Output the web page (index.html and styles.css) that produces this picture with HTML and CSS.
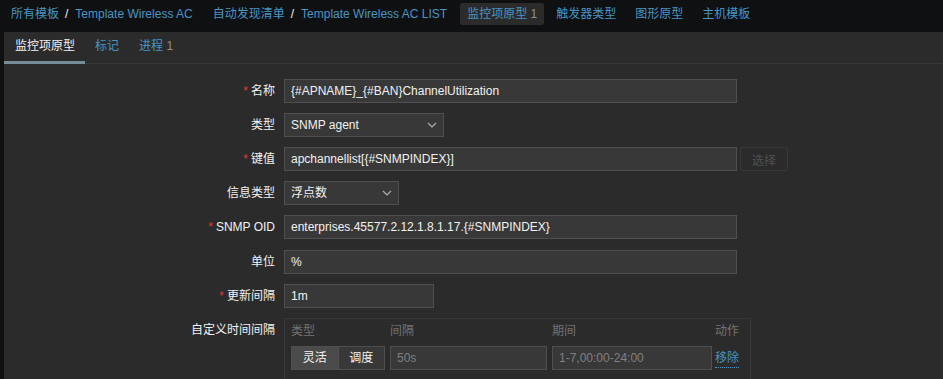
FILE: index.html
```html
<!DOCTYPE html>
<html lang="zh">
<head>
    <meta charset="UTF-8">
    <title>监控项原型</title>
    <link rel="stylesheet" href="styles.css">
</head>
<body>

<div class="topnav">
    <span class="crumb"><a href="#">所有模板</a><i class="sep">/</i><a href="#">Template Wireless AC</a></span>
    <span class="crumb"><a href="#">自动发现清单</a><i class="sep">/</i><a href="#">Template Wireless AC LIST</a></span>
    <span class="nav-item selected"><a href="#">监控项原型</a> <em>1</em></span>
    <span class="nav-item"><a href="#">触发器类型</a></span>
    <span class="nav-item"><a href="#">图形原型</a></span>
    <span class="nav-item"><a href="#">主机模板</a></span>
</div>

<div class="panel">
    <ul class="tabs">
        <li class="active">监控项原型</li>
        <li><a href="#">标记</a></li>
        <li><a href="#">进程</a> <em>1</em></li>
    </ul>

    <div class="form">
        <div class="row">
            <label class="req">名称</label>
            <div class="field"><input class="txt w-long" type="text" value="{#APNAME}_{#BAN}ChannelUtilization"></div>
        </div>
        <div class="row">
            <label>类型</label>
            <div class="field">
                <div class="select w-160">SNMP agent
                    <svg width="10" height="6" viewBox="0 0 10 6"><path d="M1 1l4 4 4-4" fill="none" stroke="#b0b0b0" stroke-width="1.2"/></svg>
                </div>
            </div>
        </div>
        <div class="row">
            <label class="req">键值</label>
            <div class="field">
                <input class="txt w-long" type="text" value="apchannellist[{#SNMPINDEX}]">
                <button class="btn-off" disabled>选择</button>
            </div>
        </div>
        <div class="row">
            <label>信息类型</label>
            <div class="field">
                <div class="select w-115">浮点数
                    <svg width="10" height="6" viewBox="0 0 10 6"><path d="M1 1l4 4 4-4" fill="none" stroke="#b0b0b0" stroke-width="1.2"/></svg>
                </div>
            </div>
        </div>
        <div class="row tall">
            <label class="req">SNMP OID</label>
            <div class="field"><input class="txt w-long" type="text" value="enterprises.45577.2.12.1.8.1.17.{#SNMPINDEX}"></div>
        </div>
        <div class="row">
            <label>单位</label>
            <div class="field"><input class="txt w-long" type="text" value="%"></div>
        </div>
        <div class="row">
            <label class="req">更新间隔</label>
            <div class="field"><input class="txt w-150" type="text" value="1m"></div>
        </div>
        <div class="row">
            <label>自定义时间间隔</label>
            <div class="field">
                <div class="intervals">
                    <div class="ih">类型</div>
                    <div class="ih">间隔</div>
                    <div class="ih">期间</div>
                    <div class="ih action">动作</div>

                    <div class="radio">
                        <span class="on">灵活</span>
                        <span>调度</span>
                    </div>
                    <input class="txt" type="text" placeholder="50s">
                    <input class="txt" type="text" placeholder="1-7,00:00-24:00">
                    <a href="#" class="remove action">移除</a>
                </div>
            </div>
        </div>
    </div>
</div>

</body>
</html>
```

FILE: styles.css
```css
* {
    padding: 0;
    margin: 0;
    list-style: none;
    box-sizing: border-box;
}
html, body {
    height: 100%;
    overflow: hidden;
}
body {
    background: #0e1012;
    color: #f2f2f2;
    font: 12px "Liberation Sans", Arial, "Noto Sans CJK SC", sans-serif;
}
a {
    color: #4796c4;
    text-decoration: none;
}
em {
    font-style: normal;
    color: #8f8f8f;
}

/* top navigation */
.topnav {
    display: flex;
    height: 32px;
    padding: 3px 0 0 4px;
}
.crumb,
.nav-item {
    height: 22px;
    line-height: 22px;
    padding: 0 7px;
    margin-right: 5px;
    border-radius: 2px;
}
.crumb {
    margin-right: 6px;
}
.sep {
    font-style: normal;
    color: #f2f2f2;
    margin: 0 7px 0 6px;
}
.nav-item.selected {
    background: #2b2b2b;
}

/* panel */
.panel {
    margin-left: 4px;
    background: #2b2b2b;
    height: 400px;
}
.tabs {
    display: flex;
    border-bottom: 1px solid #383838;
    height: 32px;
}
.tabs li {
    padding: 0 10px;
    line-height: 29px;
    height: 32px;
    border-bottom: 3px solid transparent;
}
.tabs li.active {
    padding-left: 11px;
    color: #f2f2f2;
    border-bottom-color: #768d99;
}

/* form */
.form {
    padding-top: 10px;
}
.row {
    display: flex;
    padding: 5px 0;
    min-height: 34px;
}
.row.tall {
    min-height: 35px;
}
.row label {
    width: 271px;
    flex: none;
    text-align: right;
    line-height: 24px;
    margin-right: 9px;
}
.req::before {
    content: "*";
    color: #e33734;
    margin-right: 3px;
}
.field {
    display: flex;
    gap: 3px;
}
.txt {
    height: 24px;
    padding: 0 6px;
    background: #383838;
    border: 1px solid #4f4f4f;
    color: #f2f2f2;
    font: inherit;
    outline: none;
}
.txt::placeholder {
    color: #808080;
}
.w-long {
    width: 453px;
}
.w-150 {
    width: 150px;
}
.select {
    height: 24px;
    line-height: 22px;
    padding: 0 6px;
    background: #383838;
    border: 1px solid #4f4f4f;
    display: flex;
    justify-content: space-between;
    align-items: center;
}
.w-160 {
    width: 160px;
}
.w-115 {
    width: 115px;
}
.btn-off {
    width: 48px;
    height: 24px;
    background: transparent;
    border: 1px solid #383838;
    color: #4f4f4f;
    font: inherit;
    border-radius: 2px;
}

/* custom intervals */
.intervals {
    width: 467px;
    border: 1px solid #383838;
    padding: 1px 6px 10px;
    display: grid;
    grid-template-columns: 94px 157px 160px auto;
    column-gap: 5px;
    row-gap: 4px;
}
.ih {
    line-height: 22px;
    color: #737373;
}
.action {
    margin-left: -2px;
}
.intervals .txt {
    width: 100%;
}
.radio {
    display: flex;
    border: 1px solid #4f4f4f;
    height: 24px;
}
.radio span {
    flex: 1;
    text-align: center;
    line-height: 22px;
    background: #383838;
}
.radio .on {
    background: #4b4b4b;
    border-right: 1px solid #4f4f4f;
}
.remove {
    align-self: center;
    justify-self: start;
    border-bottom: 1px dotted #4796c4;
    line-height: 18px;
}
```
